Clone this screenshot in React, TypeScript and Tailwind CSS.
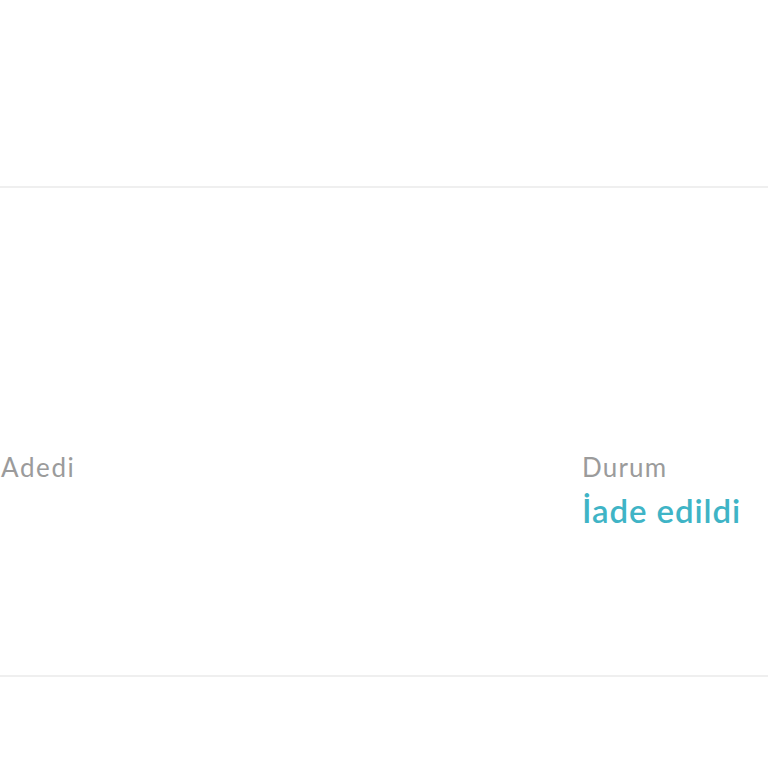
export default function App() {
  return (
    <div className="w-[768px] h-[768px] bg-white overflow-hidden" style={{ fontFamily: "Lato, 'Open Sans', sans-serif" }}>
      <div className="h-[186px]" />
      <div className="border-t-2 border-b-2 border-[#efefef] h-[491px] flex">
        <div className="pt-[263px] pl-[1px] w-[582px]">
          <div className="text-[26px] leading-[32px] tracking-[1.6px] text-[#9b9b9b]">Adedi</div>
        </div>
        <div className="pt-[263px]">
          <div className="text-[26px] leading-[32px] tracking-[1.2px] text-[#9b9b9b]">Durum</div>
          <div className="mt-[7px] text-[33px] leading-[40px] font-semibold tracking-[0.9px] text-[#3fb4c6]">İade edildi</div>
        </div>
      </div>
    </div>
  );
}
